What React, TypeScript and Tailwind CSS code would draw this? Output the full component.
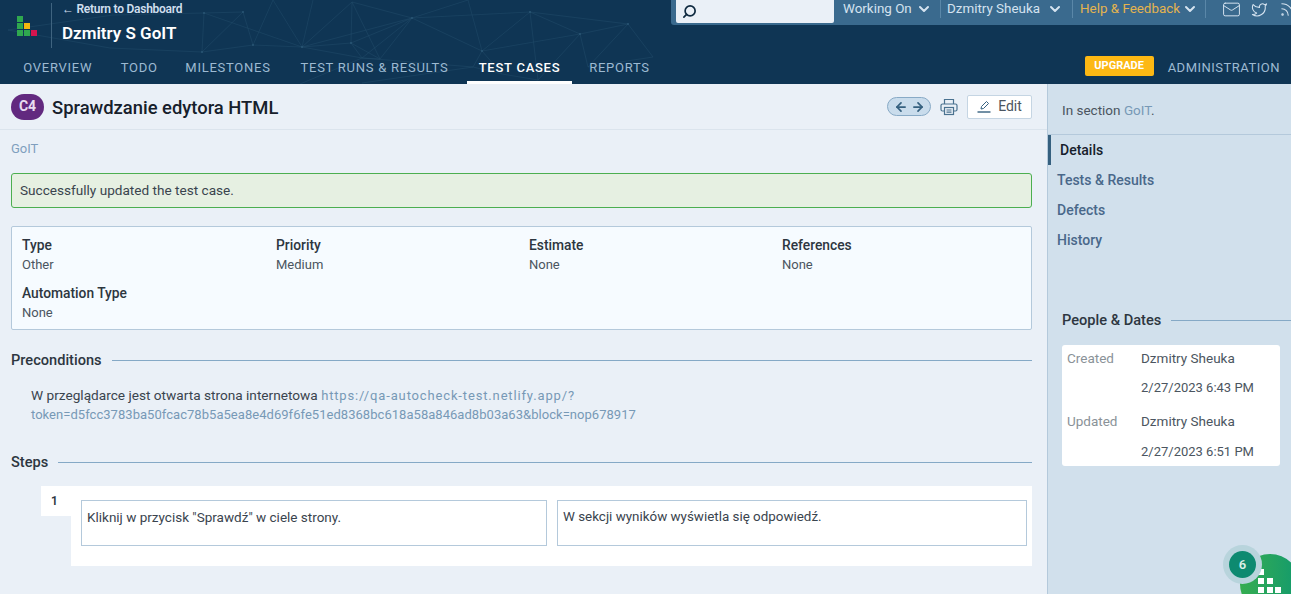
import { ChevronDown, Mail, Twitter, Rss, ArrowLeft, ArrowRight, Search } from "lucide-react";

const tabs = [
  { label: "Overview", width: "w-[98.5px]" },
  { label: "Todo", width: "w-[64.5px]" },
  { label: "Milestones", width: "w-[113px]" },
  { label: "Test Runs & Results", width: "w-[180px]" },
  { label: "Test Cases", width: "w-[105px]" },
  { label: "Reports", width: "w-[90px]" },
];

function Logo() {
  return (
    <div className="grid grid-cols-[6px_6px_6px] grid-rows-[6px_6px_6px] gap-px">
      <span className="bg-[#2fa84f]" />
      <span />
      <span />
      <span className="bg-[#2fa84f]" />
      <span className="bg-[#f5b70f]" />
      <span />
      <span className="bg-[#2fa84f]" />
      <span className="bg-[#2fa84f]" />
      <span className="bg-[#d4144f]" />
    </div>
  );
}

function HeaderLines() {
  // faint network pattern behind the header
  return (
    <svg className="absolute left-0 top-0 h-[84px] w-[1291px]" viewBox="0 0 1291 84" fill="none" stroke="#234c6a" strokeWidth="0.5">
      <path d="M8 30 L113 15 L204 13 L243 12 L253 45 L202 52 L110 48 L8 30" />
      <path d="M204 13 L202 52 M243 12 L202 52 M273 0 L253 45 M273 0 L302 47 L253 45 M204 13 L302 47" />
      <path d="M313 0 L302 47 L351 43 L412 18 L352 2 L302 47 M352 2 L351 43 M352 2 L380 59 M412 18 L302 47" />
      <path d="M302 47 L362 58 L412 18 L380 59 L351 43 L362 58 L380 59 M412 18 L482 51 L530 12 L412 18 M412 18 L468 0" />
      <path d="M468 0 L482 51 L473 67 L362 58 M482 51 L502 74 L538 80 L530 12 L580 34 L628 24 L530 12" />
      <path d="M482 51 L580 34 L588 67 L628 24 L653 57 L588 67 M580 34 L538 80 M362 83 L473 67 L502 74 M300 84 L362 58" />
      <g fill="#2a5674" stroke="none">
        <circle cx="204" cy="13" r="1" />
        <circle cx="243" cy="12" r="1" />
        <circle cx="253" cy="45" r="1" />
        <circle cx="202" cy="52" r="1" />
        <circle cx="302" cy="47" r="1" />
        <circle cx="351" cy="43" r="1" />
        <circle cx="412" cy="18" r="1" />
        <circle cx="482" cy="51" r="1" />
        <circle cx="530" cy="12" r="1" />
        <circle cx="580" cy="34" r="1" />
        <circle cx="628" cy="24" r="1" />
      </g>
    </svg>
  );
}

function TopHeader() {
  return (
    <header className="relative h-[84px] shrink-0 overflow-hidden bg-[#0f3554] text-white">
      <HeaderLines />
      <div className="relative flex h-[55px] items-start">
        <div className="mt-[3px] flex h-[45px] w-[52px] shrink-0 justify-center border-r border-[#3f6480] pl-[3px] pt-[13px]">
          <Logo />
        </div>
        <div className="ml-[10px] pt-px">
          <div className="text-[12px] font-semibold leading-[16px] tracking-[-0.25px] text-[#cfdfee]">← Return to Dashboard</div>
          <div className="mt-[6px] text-[17px] font-semibold leading-[20px]">Dzmitry S GoIT</div>
        </div>
        <div className="ml-auto flex h-[25px] w-[620px] items-start whitespace-nowrap rounded-bl-[3px] bg-[#3a6a8e] pl-[5px] text-[13.4px] leading-[18px]">
          <div className="flex h-[23px] w-[158px] shrink-0 items-center rounded-b-[2px] bg-[#eaf0f7] pl-[6px]">
            <Search size={15} strokeWidth={2.75} className="-scale-x-100 text-[#0f2a40]" />
          </div>
          <div className="flex h-[18px] w-[107px] shrink-0 items-center gap-[4px] border-r border-[#5a87a8] pl-[9px] text-[#d5e3f0]">
            Working On <ChevronDown size={16} strokeWidth={3} className="shrink-0" />
          </div>
          <div className="flex h-[18px] w-[132px] shrink-0 items-center gap-[7px] border-r border-[#5a87a8] pl-[6px] text-[#d5e3f0]">
            Dzmitry Sheuka <ChevronDown size={16} strokeWidth={3} className="shrink-0" />
          </div>
          <div className="flex h-[18px] w-[133px] shrink-0 items-center gap-[2px] border-r border-[#5a87a8] pl-[7px] text-[#e5b44e]">
            Help &amp; Feedback <ChevronDown size={16} strokeWidth={3} className="shrink-0 text-[#d5e3f0]" />
          </div>
          <div className="ml-[16px] flex shrink-0 items-center gap-[10px] text-[#d5e3f0]">
            <Mail size={19} strokeWidth={1.25} className="shrink-0" />
            <Twitter size={17} strokeWidth={1.5} className="shrink-0" />
            <Rss size={17} strokeWidth={1.5} className="ml-px shrink-0" />
          </div>
        </div>
      </div>
      <nav className="relative flex h-[29px] items-start pl-[8.5px] pr-[11px]">
        {tabs.map((t) =>
          t.label === "Test Cases" ? (
            <div key={t.label} className={`mx-[2.5px] h-[29px] border-b-[3px] border-white pt-[4px] text-center text-[13px] font-medium uppercase leading-[17px] tracking-[0.75px] text-white ${t.width}`}>
              {t.label}
            </div>
          ) : (
            <div key={t.label} className={`pt-[4px] text-center text-[13px] uppercase leading-[17px] tracking-[0.75px] text-[#9dbad2] ${t.width}`}>
              {t.label}
            </div>
          ),
        )}
        <div className="ml-auto mt-px flex h-[20px] w-[69px] items-center justify-center rounded-[2px] bg-[#fdb813] text-[11px] font-bold text-white">UPGRADE</div>
        <div className="ml-[14px] pt-[4px] text-[13px] uppercase leading-[17px] tracking-[0.5px] text-[#9dbad2]">Administration</div>
      </nav>
    </header>
  );
}

function Prop({ label, value }: { label: string; value: string }) {
  return (
    <div className="h-[48px]">
      <div className="text-[13.8px] font-medium leading-[18px] text-[#2d3640]">{label}</div>
      <div className="mt-[2px] text-[13px] leading-[18px] text-[#4b5560]">{value}</div>
    </div>
  );
}

function SectionHeading({ title, className }: { title: string; className?: string }) {
  return (
    <div className={`flex items-center gap-[10px] ${className ?? ""}`}>
      <span className="text-[14.6px] font-medium leading-[20px] text-[#2d3640]">{title}</span>
      <span className="h-px flex-1 bg-[#85a9c6]" />
    </div>
  );
}

function MainColumn() {
  return (
    <main className="w-[1048px] shrink-0 border-r border-[#b4c9db] bg-[#eaf0f7]">
      <div className="flex h-[46px] items-center border-b border-[#dbe4ed] pl-[11px] pr-[15px]">
        <span className="flex h-[26px] w-[33px] items-center justify-center rounded-full bg-[#62297f] text-[14px] font-bold text-[#e8dcef]">C4</span>
        <h1 className="ml-[8px] pt-[2px] text-[18.4px] font-medium leading-[24px] text-[#16202b]">Sprawdzanie edytora HTML</h1>
        <div className="ml-auto flex h-[19px] w-[44px] items-center justify-center gap-[3px] rounded-full border border-[#88aac6] bg-[#c9dcec] text-[#35607f]">
          <ArrowLeft size={14} strokeWidth={3} />
          <ArrowRight size={14} strokeWidth={3} />
        </div>
        <svg width="18" height="18" viewBox="0 0 18 18" fill="none" stroke="#4a7290" strokeWidth="1.2" className="ml-[9px]">
          <path d="M4.5 6 V1.5 H13.5 V6" />
          <path d="M4.5 13 H2.5 A1.5 1.5 0 0 1 1 11.5 V7.5 A1.5 1.5 0 0 1 2.5 6 H15.5 A1.5 1.5 0 0 1 17 7.5 V11.5 A1.5 1.5 0 0 1 15.5 13 H13.5" />
          <rect x="4.5" y="9.5" width="9" height="7" />
          <path d="M6.5 12 H11.5 M6.5 14.2 H11.5" />
        </svg>
        <div className="ml-[9px] flex h-[24px] w-[65px] items-center justify-center gap-[7px] rounded-[2px] border border-[#c5d5e3] bg-white text-[14px] text-[#4b5560]">
          <svg width="14" height="13" viewBox="0 0 14 13" fill="none" stroke="#35607f" strokeWidth="1">
            <path d="M4 9 L4.5 6.5 L9.5 1.5 L11.5 3.5 L6.5 8.5 Z" />
            <path d="M0.5 12 H13.5" strokeWidth="1.4" />
          </svg>
          Edit
        </div>
      </div>

      <div className="pl-[11px] pr-[15px]">
        <div className="mt-[10px] text-[13px] leading-[18px] text-[#7f9fbe]">GoIT</div>

        <div className="mt-[15px] flex h-[35px] items-center rounded-[3px] border border-[#4caf50] bg-[#e6f0e2] pl-[8px] text-[13.6px] text-[#3a444e]">
          Successfully updated the test case.
        </div>

        <div className="mt-[18px] h-[104px] rounded-[2px] border border-[#b4c9db] bg-[#f6fbff] pl-[10px] pt-[9px]">
          <div className="grid grid-cols-[254px_253px_253px_1fr]">
            <Prop label="Type" value="Other" />
            <Prop label="Priority" value="Medium" />
            <Prop label="Estimate" value="None" />
            <Prop label="References" value="None" />
            <Prop label="Automation Type" value="None" />
          </div>
        </div>

        <SectionHeading title="Preconditions" className="mt-[20px]" />

        <div className="mt-[16px] pl-[20px] text-[13.65px] leading-[19px] text-[#3a444e]">
          W przeglądarce jest otwarta strona internetowa <span className="text-[13px] tracking-[0.85px] text-[#7799b6]">https://qa-autocheck-test.netlify.app/?</span>
          <br />
          <span className="text-[13px] tracking-[0.04px] text-[#7799b6]">token=d5fcc3783ba50fcac78b5a5ea8e4d69f6fe51ed8368bc618a58a846ad8b03a63&amp;block=nop678917</span>
        </div>

        <SectionHeading title="Steps" className="mt-[28px]" />

        <div className="mt-[14px] flex pl-[30px]">
          <div className="h-[30px] w-[30px] bg-white pr-[3px] pt-[7px] text-center text-[12px] font-semibold leading-[16px] text-[#2d3640]">1</div>
          <div className="flex h-[80px] flex-1 gap-[10px] bg-white pl-[10px] pr-[5px] pt-[14px]">
            <div className="h-[46px] w-[466px] shrink-0 border border-[#b4c9db] pl-[5px] pt-[7px] text-[13.5px] leading-[18px] text-[#3a444e]">Kliknij w przycisk "Sprawdź" w ciele strony.</div>
            <div className="h-[46px] flex-1 border border-[#b4c9db] pl-[5px] pt-[7px] text-[13.4px] leading-[18px] text-[#3a444e]">W sekcji wyników wyświetla się odpowiedź.</div>
          </div>
        </div>
      </div>
    </main>
  );
}

function Sidebar() {
  return (
    <aside className="flex-1 bg-[#d1e0ec]">
      <div className="h-[51px] border-b border-[#b4c9db] pl-[14px] pt-[17px] text-[13.5px] leading-[18px] text-[#4b5560]">
        In section <span className="text-[#7799b6]">GoIT</span>.
      </div>
      <div className="flex h-[30px] items-center border-l-[3px] border-[#35607f] pl-[9px] text-[14px] font-medium text-[#16202b]">Details</div>
      {["Tests & Results", "Defects", "History"].map((t) => (
        <div key={t} className="flex h-[30px] items-center pl-[9px] text-[14px] font-medium text-[#49688a]">
          {t}
        </div>
      ))}
      <SectionHeading title="People & Dates" className="mt-[55px] pl-[14px]" />
      <div className="ml-[14px] mr-[11px] mt-[15px] rounded-[3px] bg-white px-[5px] pb-[4px] pt-[3px] text-[13.5px] leading-[21px] text-[#4b5560]">
        <div className="grid grid-cols-[74px_1fr] grid-rows-[29px_34px_30px_21px]">
          <span className="text-[#8a9298]">Created</span>
          <span>Dzmitry Sheuka</span>
          <span />
          <span className="text-[13px]">2/27/2023 6:43 PM</span>
          <span className="text-[#8a9298]">Updated</span>
          <span>Dzmitry Sheuka</span>
          <span />
          <span className="text-[13px]">2/27/2023 6:51 PM</span>
        </div>
      </div>
    </aside>
  );
}

function FeedbackWidget() {
  return (
    <div className="absolute bottom-0 right-0 h-[49px] w-[68px] overflow-hidden">
      <div className="absolute left-[17px] top-[9px] h-[60px] w-[60px] rounded-full bg-gradient-to-r from-[#35ad4f] to-[#0f9a6c]">
        <div className="absolute left-[18px] top-[15px] grid grid-cols-[6px_6px_6px] grid-rows-[6px_6px_6px] gap-x-[2.5px] gap-y-[3px]">
          <span className="bg-white" />
          <span />
          <span />
          <span className="bg-white" />
          <span className="bg-white" />
          <span />
          <span className="bg-white" />
          <span className="bg-white" />
          <span className="bg-white" />
        </div>
      </div>
      <div className="absolute left-0 top-0 flex h-[39px] w-[39px] items-center justify-center rounded-full bg-[#b8d4dc]">
        <div className="flex h-[27px] w-[27px] items-center justify-center rounded-full bg-[#0d8a70] text-[13px] font-semibold text-[#d9f0e8]">6</div>
      </div>
    </div>
  );
}

export default function App() {
  return (
    <div className="relative flex h-[594px] w-[1291px] flex-col overflow-hidden font-['Roboto',sans-serif]">
      <TopHeader />
      <div className="flex flex-1">
        <MainColumn />
        <Sidebar />
      </div>
      <FeedbackWidget />
    </div>
  );
}
